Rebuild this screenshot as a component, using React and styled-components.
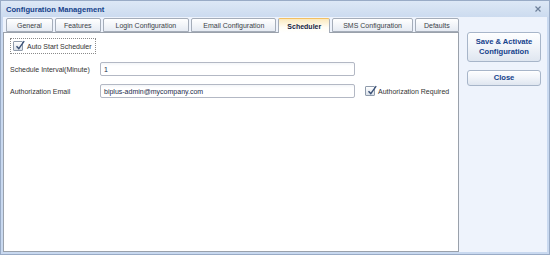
import React from 'react';
import styled, { createGlobalStyle } from 'styled-components';

const GlobalStyle = createGlobalStyle`
  body {
    margin: 0;
    font-family: "Liberation Sans", Arial, sans-serif;
  }
`;

const Window = styled.div`
  width: 550px;
  height: 255px;
  box-sizing: border-box;
  border: 1px solid #99abc6;
  background: #eef3fc;
  display: flex;
  flex-direction: column;
  font-size: 7px;
  color: #333;
`;

const TitleBar = styled.div`
  height: 16px;
  padding: 0 8px 0 5px;
  background: linear-gradient(#dde8f6, #ccdbef);
  display: flex;
  align-items: center;
  justify-content: space-between;
`;

const Title = styled.span`
  font-weight: bold;
  color: #15428b;
  font-size: 7.6px;
`;

const CloseX = styled.svg`
  width: 6px;
  height: 6px;
`;

const Body = styled.div`
  flex: 1;
  display: flex;
  gap: 8px;
  padding: 1px 6px 0 0;
  border-left: 2px solid #c9d9f0;
  border-right: 2px solid #c9d9f0;
  border-bottom: 2px solid #c9d9f0;
`;

const TabPanel = styled.div`
  width: 456px;
  display: flex;
  flex-direction: column;
`;

const TabStrip = styled.div`
  display: flex;
  gap: 2px;
  padding-left: 3px;
  height: 14px;
`;

const Tab = styled.div`
  box-sizing: border-box;
  height: ${p => (p.$active ? '15px' : '14px')};
  padding: 0 ${p => p.$pad}px;
  display: flex;
  align-items: center;
  border: 1px solid #a5adb9;
  border-bottom: ${p => (p.$active ? 'none' : '1px solid #a5adb9')};
  border-top: 1px solid ${p => (p.$active ? '#f2c063' : '#a5adb9')};
  border-radius: 2px 2px 0 0;
  background: ${p =>
    p.$active
      ? 'linear-gradient(#fbe9bd, #fffdf6 60%, #ffffff)'
      : 'linear-gradient(#ffffff, #e6ebf3)'};
  font-weight: ${p => (p.$active ? 'bold' : 'normal')};
  color: ${p => (p.$active ? '#15233d' : '#3b3f47')};
  position: relative;
  z-index: ${p => (p.$active ? 1 : 0)};
  white-space: nowrap;
`;

const TabBody = styled.div`
  flex: 1;
  background: #fff;
  border: 1px solid #9aa1ab;
  padding: 5px 6px;
  display: flex;
  flex-direction: column;
  gap: 8px;
`;

const CheckField = styled.label`
  align-self: flex-start;
  display: flex;
  align-items: center;
  gap: 4px;
  padding: 2px 3px 2px 2px;
  border: 1px dotted #8a8a8a;
  color: #333;
  white-space: nowrap;
`;

const Box = styled.span`
  width: 10px;
  height: 10px;
  box-sizing: border-box;
  border: 1px solid #8f9bab;
  border-radius: 1px;
  background: linear-gradient(#ffffff, #d9e0e9);
  display: flex;
  align-items: center;
  justify-content: center;
  position: relative;
`;

const Tick = styled.svg`
  position: absolute;
  left: 0;
  top: -3px;
  width: 12px;
  height: 12px;
`;

const Row = styled.div`
  display: grid;
  grid-template-columns: 82px 255px auto;
  align-items: center;
  column-gap: 8px;
`;

const Label = styled.span`
  color: #333;
  white-space: nowrap;
`;

const Input = styled.div`
  box-sizing: border-box;
  height: 14px;
  border: 1px solid #b3b8c4;
  border-radius: 2px;
  background: linear-gradient(#f3f5f8, #fff 3px);
  padding: 0 3px;
  display: flex;
  align-items: center;
  color: #1b2a4a;
`;

const InlineCheck = styled.label`
  display: flex;
  align-items: center;
  gap: 3px;
  margin-left: 2px;
  color: #333;
  white-space: nowrap;
`;

const ButtonColumn = styled.div`
  display: flex;
  flex-direction: column;
  gap: 8px;
  padding-top: 14px;
  width: 74px;
`;

const Button = styled.div`
  box-sizing: border-box;
  height: ${p => p.$h}px;
  border: 1px solid #a7b5c9;
  border-radius: 3px;
  background: linear-gradient(#fdfeff, #f2f5fa 45%, #dfe6f0);
  box-shadow: inset 0 1px 0 #fff;
  display: flex;
  align-items: center;
  justify-content: center;
  text-align: center;
  font-weight: bold;
  color: #15428b;
  line-height: 10px;
  font-size: 7.6px;
`;

const Check = ({ children }) => (
  <>
    <Box>
      <Tick viewBox="0 0 12 12">
        <path d="M2.5 7.2 L4.8 9.6 L10.2 2.2" fill="none" stroke="#3c5277" strokeWidth="1.4" />
      </Tick>
    </Box>
    <span>{children}</span>
  </>
);

const tabs = [
  { label: 'General', pad: 10 },
  { label: 'Features', pad: 8 },
  { label: 'Login Configuration', pad: 12 },
  { label: 'Email Configuration', pad: 11 },
  { label: 'Scheduler', pad: 8 },
  { label: 'SMS Configuration', pad: 10 },
  { label: 'Defaults', pad: 8 },
];

export default function App() {
  return (
    <>
      <GlobalStyle />
      <Window>
        <TitleBar>
          <Title>Configuration Management</Title>
          <CloseX viewBox="0 0 6 6">
            <path d="M0.5 0.5 L5.5 5.5 M5.5 0.5 L0.5 5.5" stroke="#6d7f99" strokeWidth="1.2" />
          </CloseX>
        </TitleBar>
        <Body>
          <TabPanel>
            <TabStrip>
              {tabs.map(t => (
                <Tab key={t.label} $pad={t.pad} $active={t.label === 'Scheduler'}>
                  {t.label}
                </Tab>
              ))}
            </TabStrip>
            <TabBody>
              <CheckField>
                <Check>Auto Start Scheduler</Check>
              </CheckField>
              <Row>
                <Label>Schedule Interval(Minute)</Label>
                <Input>1</Input>
              </Row>
              <Row>
                <Label>Authorization Email</Label>
                <Input>biplus-admin@mycompany.com</Input>
                <InlineCheck>
                  <Check>Authorization Required</Check>
                </InlineCheck>
              </Row>
            </TabBody>
          </TabPanel>
          <ButtonColumn>
            <Button $h={30}>Save &amp; Activate<br />Configuration</Button>
            <Button $h={16}>Close</Button>
          </ButtonColumn>
        </Body>
      </Window>
    </>
  );
}
